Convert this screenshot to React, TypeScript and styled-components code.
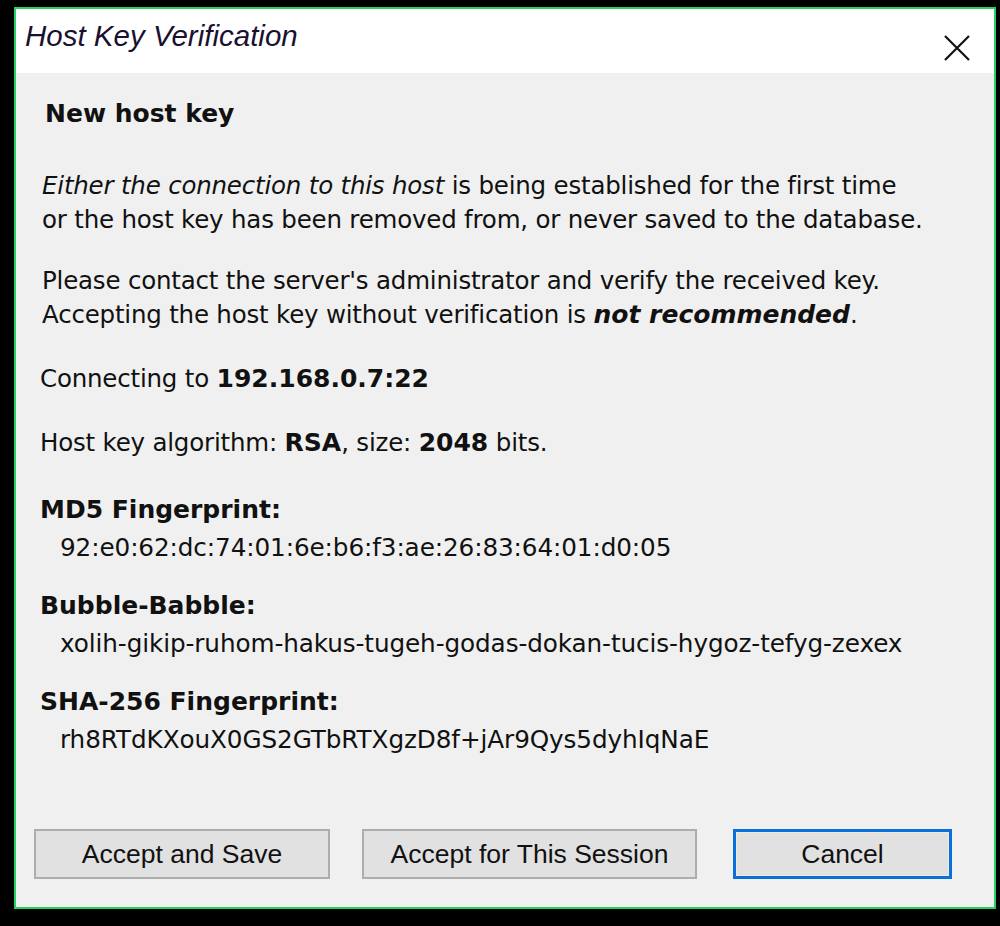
import React from 'react';
import styled, { createGlobalStyle } from 'styled-components';

const GlobalStyle = createGlobalStyle`
  html, body {
    margin: 0;
    padding: 0;
    background: #000;
  }
  body {
    width: 1000px;
    height: 926px;
    overflow: hidden;
  }
`;

const Screen = styled.div`
  width: 1000px;
  height: 926px;
  background: #000;
  padding: 7px 4px 0 14px;
  box-sizing: border-box;
`;

const Window = styled.div`
  width: 982px;
  height: 902px;
  box-sizing: border-box;
  border: 2px solid #23d35f;
  background: #f0f0f0;
  display: flex;
  flex-direction: column;
  font-family: 'DejaVu Sans', Verdana, sans-serif;
  color: #111;
`;

const TitleBar = styled.div`
  height: 64px;
  background: #fff;
  display: flex;
  align-items: center;
  justify-content: space-between;
  padding: 0 22px 0 9px;
  flex-shrink: 0;
`;

const Title = styled.span`
  font-family: 'Liberation Sans', Arial, sans-serif;
  font-style: italic;
  font-size: 29.5px;
  color: #1a1030;
  margin-top: -10px;
`;

const CloseButton = styled.button`
  width: 30px;
  height: 30px;
  padding: 0;
  border: none;
  background: none;
  display: flex;
  align-items: center;
  justify-content: center;
  margin-top: 14px;
  cursor: default;
`;

const Body = styled.div`
  flex: 1;
  display: flex;
  flex-direction: column;
  padding: 24px 0 0 24px;
`;

const Heading = styled.div`
  font-weight: bold;
  font-size: 25px;
  line-height: 34px;
  margin: 0 0 38px 5px;
`;

const Paragraph = styled.p<{ $gap?: number; $indent?: number }>`
  margin: 0 0 ${p => p.$gap ?? 28}px ${p => p.$indent ?? 2}px;
  font-size: 24.5px;
  line-height: 34px;
  letter-spacing: -0.2px;
`;

const Italic = styled.span`
  font-style: italic;
`;

const Strong = styled.b`
  font-weight: bold;
  font-size: 25px;
  letter-spacing: 0;
`;

const StrongItalic = styled(Strong)`
  font-style: italic;
`;

const FingerprintBlock = styled.div`
  display: flex;
  flex-direction: column;
  margin-bottom: 20px;
`;

const Label = styled.div`
  font-weight: bold;
  font-size: 25px;
  line-height: 38px;
`;

const Value = styled.div`
  font-size: 24.7px;
  line-height: 38px;
  letter-spacing: -0.1px;
  padding-left: 20px;
`;

const ButtonRow = styled.div`
  display: flex;
  align-items: center;
  gap: 32px;
  margin-top: auto;
  margin-bottom: 28px;
  margin-left: -6px;
`;

const Button = styled.button<{ $width: number; $default?: boolean }>`
  width: ${p => p.$width}px;
  height: 50px;
  box-sizing: border-box;
  background: #e1e1e1;
  border: ${p => (p.$default ? '3px solid #0a6fd6' : '2px solid #adadad')};
  box-shadow: ${p => (p.$default ? 'inset 0 0 0 1px #f4e8dc' : 'none')};
  font-family: 'Liberation Sans', Arial, sans-serif;
  font-size: 26.5px;
  color: #111;
  padding: 0;
  cursor: default;
`;

const fingerprints = [
  { label: 'MD5 Fingerprint:', value: '92:e0:62:dc:74:01:6e:b6:f3:ae:26:83:64:01:d0:05' },
  { label: 'Bubble-Babble:', value: 'xolih-gikip-ruhom-hakus-tugeh-godas-dokan-tucis-hygoz-tefyg-zexex' },
  { label: 'SHA-256 Fingerprint:', value: 'rh8RTdKXouX0GS2GTbRTXgzD8f+jAr9Qys5dyhIqNaE' },
];

export default function App() {
  return (
    <>
      <GlobalStyle />
      <Screen>
        <Window>
          <TitleBar>
            <Title>Host Key Verification</Title>
            <CloseButton aria-label="Close">
              <svg width="26" height="26" viewBox="0 0 26 26">
                <path d="M1 1 L25 25 M25 1 L1 25" stroke="#111" strokeWidth="2.2" fill="none" />
              </svg>
            </CloseButton>
          </TitleBar>
          <Body>
            <Heading>New host key</Heading>
            <Paragraph $gap={27}>
              <Italic>Either the connection to this host</Italic> is being established for the first time
              <br />
              or the host key has been removed from, or never saved to the database.
            </Paragraph>
            <Paragraph $gap={30}>
              Please contact the server's administrator and verify the received key.
              <br />
              Accepting the host key without verification is <StrongItalic>not recommended</StrongItalic>.
            </Paragraph>
            <Paragraph $gap={30} $indent={0}>
              Connecting to <Strong>192.168.0.7:22</Strong>
            </Paragraph>
            <Paragraph $gap={31} $indent={0}>
              Host key algorithm: <Strong>RSA</Strong>, size: <Strong>2048</Strong> bits.
            </Paragraph>
            {fingerprints.map(f => (
              <FingerprintBlock key={f.label}>
                <Label>{f.label}</Label>
                <Value>{f.value}</Value>
              </FingerprintBlock>
            ))}
            <ButtonRow>
              <Button $width={296}>Accept and Save</Button>
              <Button $width={335}>Accept for This Session</Button>
              <Button $width={219} $default style={{ marginLeft: 4 }}>Cancel</Button>
            </ButtonRow>
          </Body>
        </Window>
      </Screen>
    </>
  );
}
